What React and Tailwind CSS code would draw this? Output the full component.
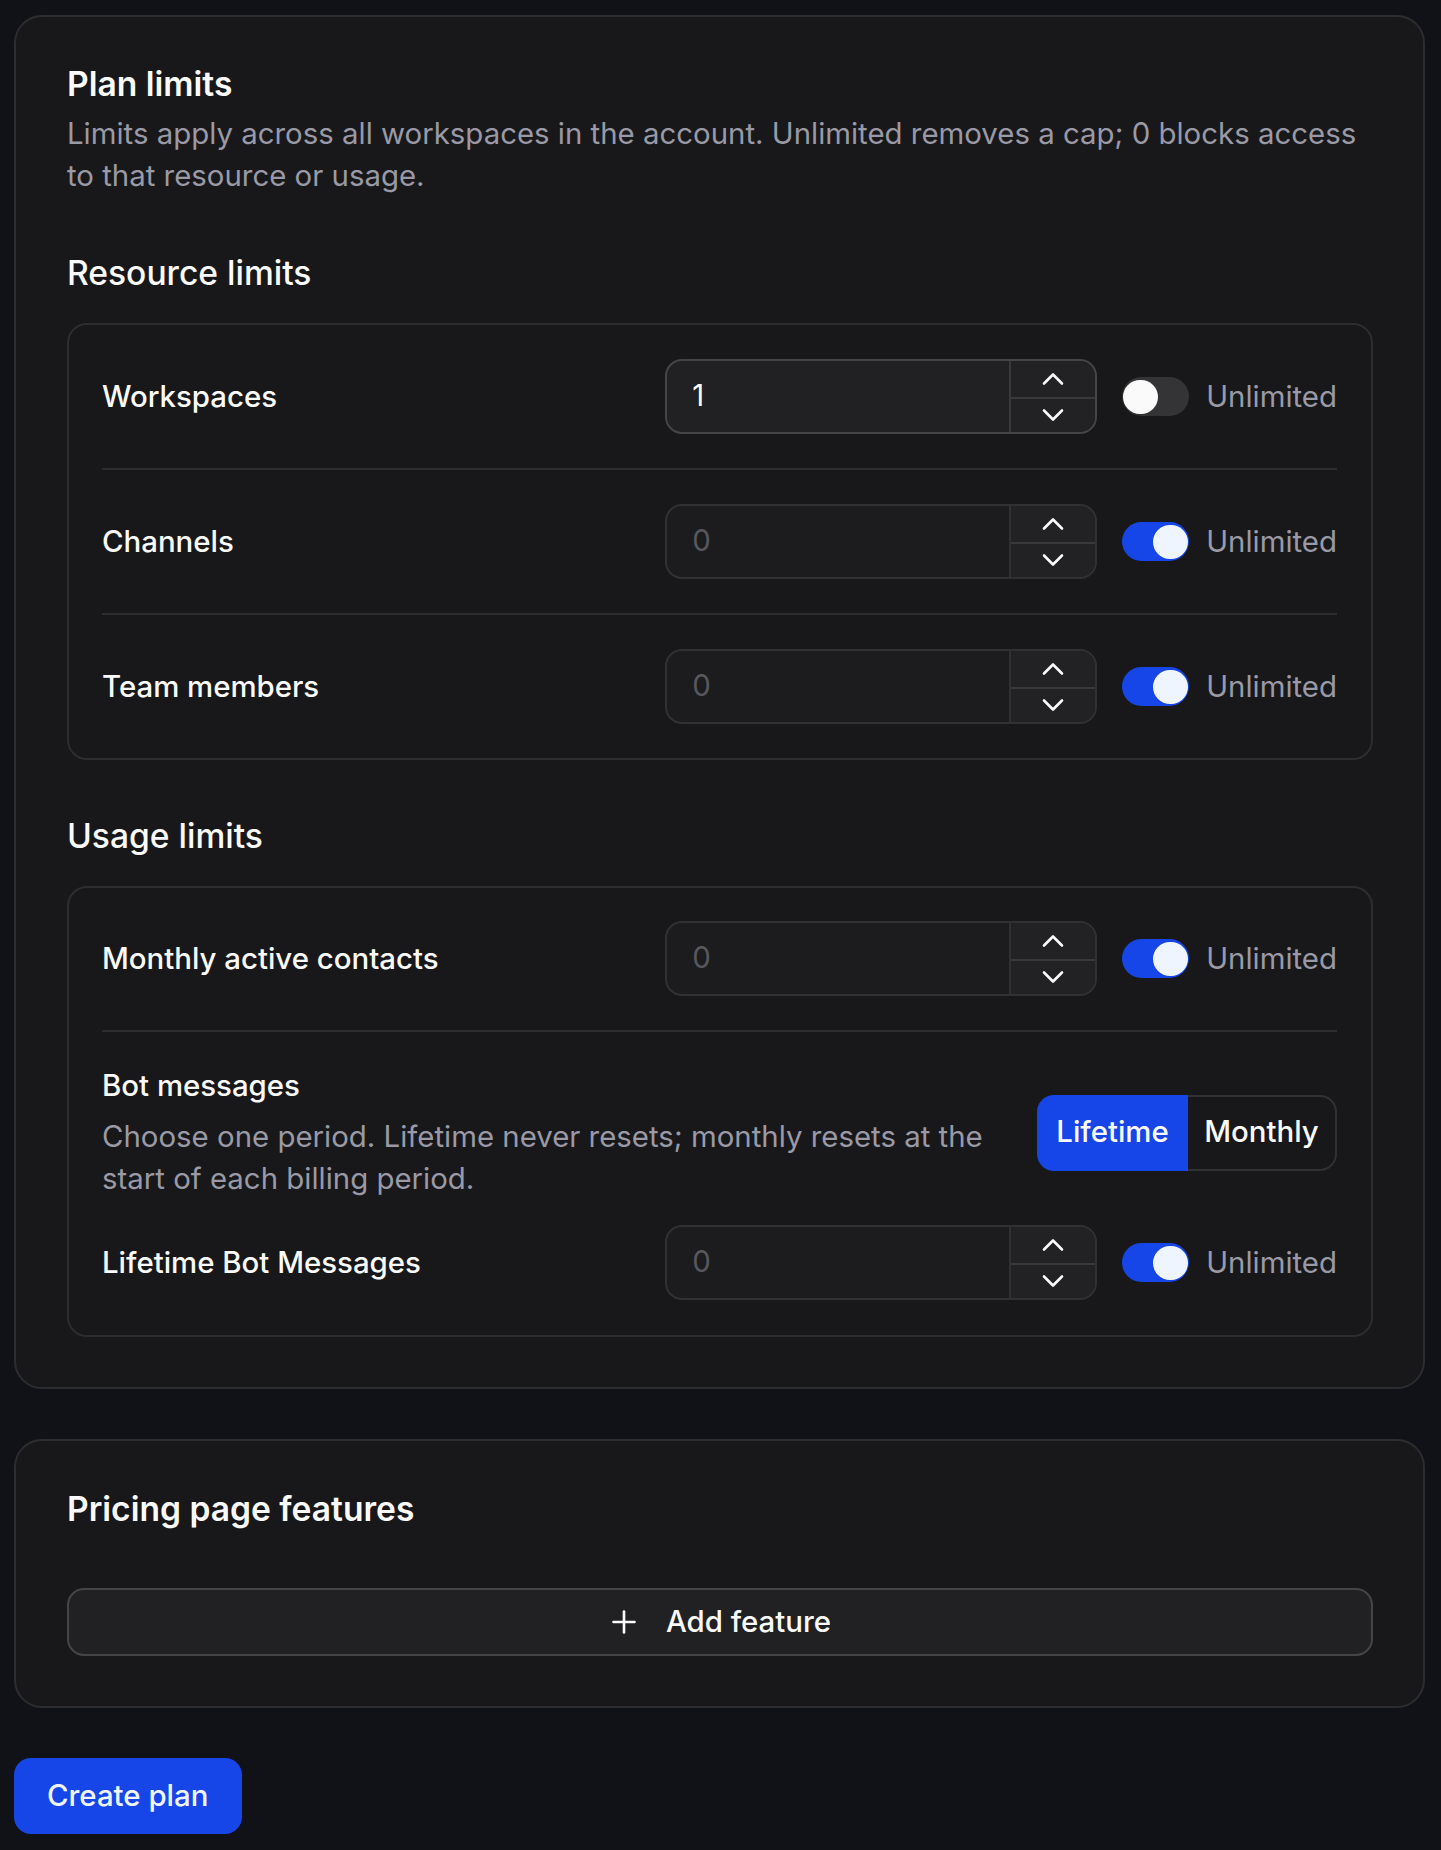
import React from "react";
import { ChevronUp, ChevronDown, Plus } from "lucide-react";

function NumberField({ value, active }) {
  return (
    <div className={`flex h-[75px] w-[432px] shrink-0 overflow-hidden rounded-[17px] border-2 ${active ? "border-[#454548] bg-[#212123]" : "border-[#313134] bg-[#1c1c1e]"}`}>
      <div className={`flex flex-1 items-center px-[25px] text-[29.4px] ${active ? "text-[#fafafa]" : "text-[#57575d]"}`}>{value}</div>
      <div className={`flex w-[86px] flex-col border-l-2 bg-[#222224] text-[#fafafa] ${active ? "border-[#39393c]" : "border-[#313134]"}`}>
        <div className="flex flex-1 items-center justify-center border-b-2 border-[#39393c]">
          <ChevronUp size={36} strokeWidth={1.75} />
        </div>
        <div className="flex flex-1 items-center justify-center">
          <ChevronDown size={36} strokeWidth={1.75} className="-mt-[2px]" />
        </div>
      </div>
    </div>
  );
}

function Toggle({ on }) {
  return (
    <div className={`flex h-[39px] w-[67px] items-center rounded-full px-[1px] ${on ? "justify-end bg-[#1646e8]" : "justify-start bg-[#343436]"}`}>
      <div className={`h-[34px] w-[35px] rounded-full ${on ? "bg-[#eff5ff]" : "bg-[#fafafa]"}`} />
    </div>
  );
}

function LimitControls({ value, active, on }) {
  return (
    <div className="flex items-center">
      <NumberField value={value} active={active} />
      <div className="ml-[25px]"><Toggle on={on} /></div>
      <span className="ml-[17px] text-[29.4px] leading-[42px] text-[#9a9aa6]">Unlimited</span>
    </div>
  );
}

function Row({ label, value, active, on, divider }) {
  return (
    <div className={`flex items-center justify-between ${divider ? "border-b-2 border-[#2d2d30] pb-[34px]" : ""}`}>
      <span className="text-[29.4px] font-medium leading-[42px] text-[#fafafa]">{label}</span>
      <LimitControls value={value} active={active} on={on} />
    </div>
  );
}

export default function App() {
  return (
    <div className="min-h-[1850px] bg-[#111217] pl-[14px] pr-[16px] pt-[15px] font-['Inter',sans-serif]" >
      <section className="rounded-[28px] border-2 border-[#2d2d30] bg-[#18181b] pb-[50px] pl-[51px] pr-[50px] pt-[45px]">
        <h2 className="text-[33.6px] font-semibold leading-[44px] text-[#fafafa]">Plan limits</h2>
        <p className="mt-[7px] text-[29.4px] leading-[42px] text-[#9a9aa6]">
          Limits apply across all workspaces in the account. Unlimited removes a cap; 0 blocks access to that resource or usage.
        </p>

        <h3 className="mb-[28px] mt-[54px] text-[33.6px] font-medium leading-[44px] text-[#fafafa]">Resource limits</h3>
        <div className="flex flex-col gap-[34px] rounded-[20px] border-2 border-[#2d2d30] py-[34px] pl-[33px] pr-[34px]">
          <Row label="Workspaces" value="1" active on={false} divider />
          <Row label="Channels" value="0" on divider />
          <Row label="Team members" value="0" on />
        </div>

        <h3 className="mb-[28px] mt-[54px] text-[33.6px] font-medium leading-[44px] text-[#fafafa]">Usage limits</h3>
        <div className="rounded-[20px] border-2 border-[#2d2d30] pb-[35px] pl-[33px] pr-[34px] pt-[33px]">
          <Row label="Monthly active contacts" value="0" on divider />
          <div className="mt-[33px] flex items-center justify-between">
            <div className="w-[900px]">
              <div className="text-[29.4px] font-medium leading-[42px] text-[#fafafa]">Bot messages</div>
              <p className="mt-[9px] text-[29.4px] leading-[42px] text-[#9a9aa6]">
                Choose one period. Lifetime never resets; monthly resets at the start of each billing period.
              </p>
            </div>
            <div className="flex h-[76px] w-[300px] text-[29.4px] font-medium text-[#fafafa]">
              <div className="flex w-[151px] items-center justify-center rounded-l-[17px] bg-[#1646e8]">Lifetime</div>
              <div className="flex flex-1 items-center justify-center rounded-r-[17px] border-2 border-l-0 border-[#313134]">Monthly</div>
            </div>
          </div>
          <div className="mt-[25px]">
            <Row label="Lifetime Bot Messages" value="0" on />
          </div>
        </div>
      </section>

      <section className="mt-[50px] rounded-[28px] border-2 border-[#2d2d30] bg-[#18181b] pb-[50px] pl-[51px] pr-[50px] pt-[46px]">
        <h2 className="text-[33.6px] font-semibold leading-[44px] text-[#fafafa]">Pricing page features</h2>
        <button className="mt-[57px] flex h-[68px] w-full items-center justify-center gap-[24px] rounded-[17px] border-2 border-[#454548] bg-[#212123] pr-[3px] text-[29.4px] font-medium text-[#fafafa]">
          <Plus size={36} strokeWidth={1.75} />
          Add feature
        </button>
      </section>

      <button className="mt-[50px] h-[76px] rounded-[17px] bg-[#1646e8] pl-[33px] pr-[34px] text-[29.4px] font-medium text-[#eff5ff]">Create plan</button>
    </div>
  );
}
